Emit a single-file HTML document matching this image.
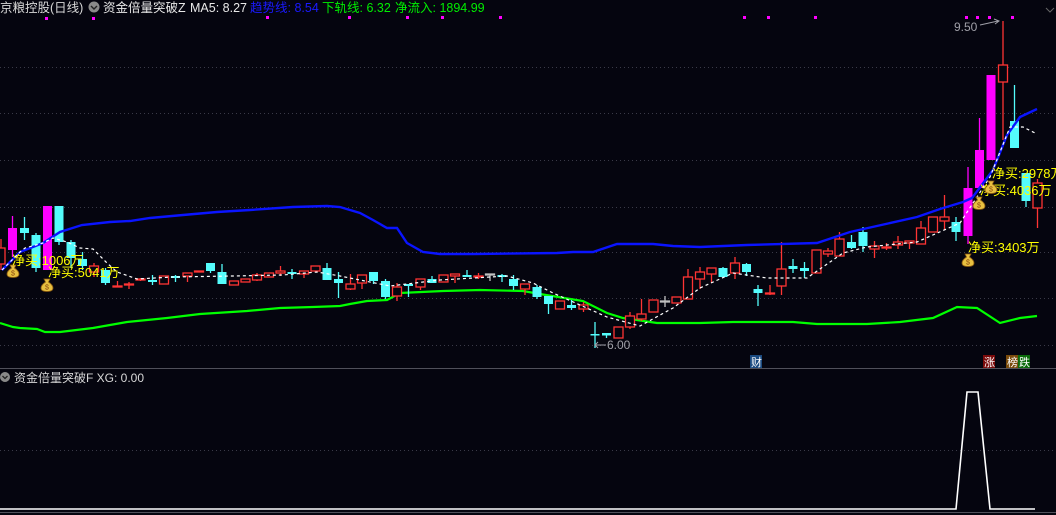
<!DOCTYPE html>
<html><head><meta charset="utf-8"><style>
html,body{margin:0;padding:0;background:#05050f;width:1056px;height:515px;overflow:hidden}
svg{position:absolute;left:0;top:0}
text{font-family:"Liberation Sans","Noto Sans CJK SC",sans-serif}
.r{fill:#05050f;stroke:#ff3434;stroke-width:1.3}
.rw{stroke:#ff3434;stroke-width:1.3}
.c{fill:#54fcfc}
.cw{stroke:#54fcfc;stroke-width:1.3}
.m{fill:#ff00ff}
.mw{stroke:#ff00ff;stroke-width:1.3}
.g{fill:#05050f;stroke:#c0c0c0;stroke-width:1.3}
.gw{stroke:#c0c0c0;stroke-width:1.3}
.grid{stroke:#3a3a48;stroke-width:1;stroke-dasharray:1 3}
</style></head><body>
<svg width="1056" height="515" viewBox="0 0 1056 515" xmlns="http://www.w3.org/2000/svg">
<g class="grid">
<line x1="0" y1="67.5" x2="1056" y2="67.5"/><line x1="0" y1="113.5" x2="1056" y2="113.5"/><line x1="0" y1="160.5" x2="1056" y2="160.5"/><line x1="0" y1="207.5" x2="1056" y2="207.5"/><line x1="0" y1="252.5" x2="1056" y2="252.5"/><line x1="0" y1="298.5" x2="1056" y2="298.5"/><line x1="0" y1="345.5" x2="1056" y2="345.5"/><line x1="0" y1="450.5" x2="1056" y2="450.5"/>
</g>
<line x1="0" y1="368.5" x2="1056" y2="368.5" stroke="#50505a"/>
<line x1="0" y1="512.5" x2="1056" y2="512.5" stroke="#50505a"/>
<!-- green lower band -->
<polyline fill="none" stroke="#00ff00" stroke-width="2.2" points="0,323 13,327 20,328 37,329 45,332 60,332 93,328 127,322 167,318 200,314 247,311 280,308 313,307 340,306 350,304 367,301 387,300 400,293 443,291 480,290 523,291 540,294 583,301 607,313 623,318 657,323 700,323 733,322 793,322 817,324 867,324 900,322 933,318 957,307 977,308 1000,323 1020,318 1037,316"/>
<!-- candles -->
<g>
<line class="rw" x1="1" y1="239" x2="1" y2="270"/><rect class="r" x="-4" y="248" width="9" height="16"/>
<line class="mw" x1="12.5" y1="216" x2="12.5" y2="257"/><rect class="m" x="8" y="228" width="9" height="22"/>
<line class="cw" x1="24.5" y1="217" x2="24.5" y2="240"/><rect class="c" x="20" y="228" width="9" height="5"/>
<line class="cw" x1="36" y1="233" x2="36" y2="272"/><rect class="c" x="31.5" y="235" width="9" height="33"/>
<rect class="m" x="43" y="206" width="9" height="64"/>
<line class="cw" x1="59" y1="206" x2="59" y2="245"/><rect class="c" x="54.5" y="206" width="9" height="36"/>
<line class="cw" x1="71" y1="240" x2="71" y2="268"/><rect class="c" x="66.5" y="242" width="9" height="16"/>
<line class="cw" x1="82.5" y1="252" x2="82.5" y2="270"/><rect class="c" x="78" y="259" width="9" height="7"/>
<line class="rw" x1="94" y1="263" x2="94" y2="277"/><rect class="r" x="89.5" y="266" width="9" height="6"/>
<line class="cw" x1="105.5" y1="268" x2="105.5" y2="285"/><rect class="c" x="101" y="270" width="9" height="13"/>
<line class="rw" x1="117.5" y1="281" x2="117.5" y2="287"/><rect class="r" x="113" y="286" width="9" height="1"/>
<line class="rw" x1="129" y1="282" x2="129" y2="289"/><rect class="r" x="124.5" y="284" width="9" height="1"/>
<line class="rw" x1="140.5" y1="278" x2="140.5" y2="281"/><rect class="r" x="136" y="279" width="9" height="1"/>
<line class="cw" x1="152.5" y1="275" x2="152.5" y2="285"/><rect class="c" x="148" y="280" width="9" height="2"/>
<rect class="r" x="159.5" y="276" width="9" height="8"/>
<line class="cw" x1="175.5" y1="275" x2="175.5" y2="282"/><rect class="c" x="171" y="276" width="9" height="2"/>
<line class="rw" x1="187.5" y1="273" x2="187.5" y2="282"/><rect class="r" x="183" y="273" width="9" height="3"/>
<rect class="r" x="194.5" y="271" width="9" height="1"/>
<line class="cw" x1="210.5" y1="263" x2="210.5" y2="273"/><rect class="c" x="206" y="263" width="9" height="8"/>
<line class="cw" x1="222" y1="264" x2="222" y2="284"/><rect class="c" x="217.5" y="272" width="9" height="12"/>
<rect class="r" x="229.5" y="281" width="9" height="4"/>
<rect class="r" x="241" y="279" width="9" height="3"/>
<line class="rw" x1="257" y1="273" x2="257" y2="281"/><rect class="r" x="252.5" y="275" width="9" height="5"/>
<rect class="r" x="264.5" y="273" width="9" height="4"/>
<line class="rw" x1="280.5" y1="266" x2="280.5" y2="276"/><rect class="r" x="276" y="271" width="9" height="2"/>
<line class="cw" x1="292" y1="269" x2="292" y2="279"/><rect class="c" x="287.5" y="272" width="9" height="2"/>
<line class="rw" x1="304" y1="271" x2="304" y2="278"/><rect class="r" x="299.5" y="271" width="9" height="3"/>
<rect class="r" x="311" y="266" width="9" height="5"/>
<line class="cw" x1="327" y1="263" x2="327" y2="280"/><rect class="c" x="322.5" y="268" width="9" height="12"/>
<line class="cw" x1="338.5" y1="272" x2="338.5" y2="298"/><rect class="c" x="334" y="279" width="9" height="4"/>
<line class="rw" x1="350.5" y1="274" x2="350.5" y2="290"/><rect class="r" x="346" y="284" width="9" height="5"/>
<line class="rw" x1="362" y1="275" x2="362" y2="289"/><rect class="r" x="357.5" y="275" width="9" height="8"/>
<line class="cw" x1="373.5" y1="272" x2="373.5" y2="284"/><rect class="c" x="369" y="272" width="9" height="9"/>
<line class="cw" x1="385.5" y1="279" x2="385.5" y2="299"/><rect class="c" x="381" y="281" width="9" height="16"/>
<line class="rw" x1="397" y1="283" x2="397" y2="301"/><rect class="r" x="392.5" y="287" width="9" height="9"/>
<line class="cw" x1="408.5" y1="284" x2="408.5" y2="297"/><rect class="c" x="404" y="284" width="9" height="2"/>
<line class="rw" x1="420.5" y1="279" x2="420.5" y2="290"/><rect class="r" x="416" y="279" width="9" height="8"/>
<line class="cw" x1="432" y1="276" x2="432" y2="283"/><rect class="c" x="427.5" y="279" width="9" height="4"/>
<rect class="r" x="439" y="275" width="9" height="7"/>
<line class="rw" x1="455" y1="274" x2="455" y2="283"/><rect class="r" x="450.5" y="274" width="9" height="2"/>
<line class="cw" x1="467" y1="270" x2="467" y2="277"/><rect class="c" x="462.5" y="275" width="9" height="2"/>
<line class="rw" x1="478.5" y1="273" x2="478.5" y2="279"/><rect class="r" x="474" y="276" width="9" height="1"/>
<line class="gw" x1="490" y1="274" x2="490" y2="281"/><rect class="g" x="485.5" y="274" width="9" height="1"/>
<line class="cw" x1="502" y1="274" x2="502" y2="282"/><rect class="c" x="497.5" y="275" width="9" height="2"/>
<line class="cw" x1="513.5" y1="275" x2="513.5" y2="290"/><rect class="c" x="509" y="279" width="9" height="7"/>
<line class="rw" x1="525" y1="284" x2="525" y2="295"/><rect class="r" x="520.5" y="284" width="9" height="5"/>
<line class="cw" x1="537" y1="285" x2="537" y2="299"/><rect class="c" x="532.5" y="287" width="9" height="10"/>
<line class="cw" x1="548.5" y1="296" x2="548.5" y2="314"/><rect class="c" x="544" y="296" width="9" height="8"/>
<rect class="r" x="555.5" y="301" width="9" height="8"/>
<line class="cw" x1="571.5" y1="300" x2="571.5" y2="310"/><rect class="c" x="567" y="305" width="9" height="3"/>
<line class="rw" x1="583.5" y1="302" x2="583.5" y2="312"/><rect class="r" x="579" y="305" width="9" height="4"/>
<line class="cw" x1="595" y1="322" x2="595" y2="348"/><rect class="c" x="590.5" y="334" width="9" height="1.5"/>
<line class="cw" x1="606.5" y1="333" x2="606.5" y2="338"/><rect class="c" x="602" y="333" width="9" height="2.5"/>
<rect class="r" x="614" y="327" width="9" height="11"/>
<line class="rw" x1="630" y1="312" x2="630" y2="329"/><rect class="r" x="625.5" y="316" width="9" height="11"/>
<line class="rw" x1="641.5" y1="299" x2="641.5" y2="321"/><rect class="r" x="637" y="314" width="9" height="5"/>
<rect class="r" x="649" y="300" width="9" height="12"/>
<line class="gw" x1="665" y1="296" x2="665" y2="307"/><rect class="g" x="660.5" y="301" width="9" height="1"/>
<rect class="r" x="672" y="297" width="9" height="6"/>
<line class="rw" x1="688" y1="269" x2="688" y2="299"/><rect class="r" x="683.5" y="277" width="9" height="22"/>
<line class="rw" x1="700" y1="267" x2="700" y2="289"/><rect class="r" x="695.5" y="272" width="9" height="7"/>
<line class="rw" x1="711.5" y1="268" x2="711.5" y2="283"/><rect class="r" x="707" y="268" width="9" height="6"/>
<line class="cw" x1="723" y1="267" x2="723" y2="278"/><rect class="c" x="718.5" y="268" width="9" height="9"/>
<line class="rw" x1="735" y1="257" x2="735" y2="279"/><rect class="r" x="730.5" y="263" width="9" height="10"/>
<line class="cw" x1="746.5" y1="263" x2="746.5" y2="276"/><rect class="c" x="742" y="264" width="9" height="8"/>
<line class="cw" x1="758" y1="285" x2="758" y2="306"/><rect class="c" x="753.5" y="289" width="9" height="4"/>
<line class="rw" x1="770" y1="285" x2="770" y2="295"/><rect class="r" x="765.5" y="293" width="9" height="1"/>
<line class="rw" x1="781.5" y1="242" x2="781.5" y2="295"/><rect class="r" x="777" y="269" width="9" height="17"/>
<line class="cw" x1="793" y1="259" x2="793" y2="273"/><rect class="c" x="788.5" y="266" width="9" height="3"/>
<line class="cw" x1="804.5" y1="262" x2="804.5" y2="278"/><rect class="c" x="800" y="268" width="9" height="3"/>
<rect class="r" x="812" y="250" width="9" height="23"/>
<line class="rw" x1="828" y1="248" x2="828" y2="257"/><rect class="r" x="823.5" y="251" width="9" height="3"/>
<line class="rw" x1="839.5" y1="232" x2="839.5" y2="256"/><rect class="r" x="835" y="239" width="9" height="17"/>
<line class="cw" x1="851.5" y1="235" x2="851.5" y2="249"/><rect class="c" x="847" y="242" width="9" height="6"/>
<line class="cw" x1="863" y1="227" x2="863" y2="252"/><rect class="c" x="858.5" y="232" width="9" height="14"/>
<line class="rw" x1="874.5" y1="241" x2="874.5" y2="258"/><rect class="r" x="870" y="246" width="9" height="3"/>
<line class="rw" x1="886.5" y1="243" x2="886.5" y2="250"/><rect class="r" x="882" y="247" width="9" height="1"/>
<line class="rw" x1="898" y1="236" x2="898" y2="249"/><rect class="r" x="893.5" y="242" width="9" height="3"/>
<line class="rw" x1="909.5" y1="241" x2="909.5" y2="249"/><rect class="r" x="905" y="241" width="9" height="2"/>
<line class="rw" x1="921" y1="221" x2="921" y2="244"/><rect class="r" x="916.5" y="228" width="9" height="16"/>
<rect class="r" x="928.5" y="217" width="9" height="15"/>
<line class="rw" x1="944.5" y1="195" x2="944.5" y2="230"/><rect class="r" x="940" y="217" width="9" height="4"/>
<line class="cw" x1="956" y1="217" x2="956" y2="241"/><rect class="c" x="951.5" y="222" width="9" height="10"/>
<line class="mw" x1="968" y1="167" x2="968" y2="244"/><rect class="m" x="963.5" y="188" width="9" height="48"/>
<line class="mw" x1="979.5" y1="118" x2="979.5" y2="188"/><rect class="m" x="975" y="150" width="9" height="38"/>
<rect class="m" x="986.5" y="75" width="9" height="85"/>
<line class="rw" x1="1003" y1="21" x2="1003" y2="140"/><rect class="r" x="998.5" y="65" width="9" height="17"/>
<line class="cw" x1="1014.5" y1="85" x2="1014.5" y2="148"/><rect class="c" x="1010" y="121" width="9" height="27"/>
<line class="cw" x1="1026" y1="173" x2="1026" y2="207"/><rect class="c" x="1021.5" y="173" width="9" height="28"/>
<line class="rw" x1="1037.5" y1="179" x2="1037.5" y2="228"/><rect class="r" x="1033" y="183" width="9" height="25"/>
</g>
<!-- blue trend -->
<polyline fill="none" stroke="#0a14ff" stroke-width="2.4" points="2,270 20,252 43,243 60,232 82,225 110,222 130,221 150,218 183,215 217,212 250,210 293,207 327,206 340,207 360,213 373,220 387,228 397,228 407,243 423,252 440,254 473,254 557,253 573,252 593,252 617,244 653,244 673,246 700,247 747,245 817,243 850,232 917,217 940,209 963,202 972,198 993,170 1007,135 1020,117 1037,109"/>
<!-- white dashed MA -->
<polyline fill="none" stroke="#ffffff" stroke-width="1.2" stroke-dasharray="3 3" points="2,270 20,252 25,248 43,243 53,238 67,242 80,248 93,249 107,263 117,272 137,279 173,277 233,276 283,275 317,272 340,276 390,286 440,280 507,276 533,283 553,293 607,317 640,326 673,308 700,288 733,273 767,278 807,278 843,253 867,247 917,242 960,223 990,177 1010,127 1023,127 1035,133"/>
<!-- money bags -->
<g>
<g transform="translate(13,271)"><path d="M-3,-6 L3,-6 L1.5,-3 Q6,0 6,3 Q6,6.5 0,6.5 Q-6,6.5 -6,3 Q-6,0 -1.5,-3 Z" fill="#e8c040" stroke="#8a5a10" stroke-width="0.8"/><text x="0" y="4.5" font-size="7" text-anchor="middle" fill="#8a4a10">$</text></g>
<g transform="translate(47,285)"><path d="M-3,-6 L3,-6 L1.5,-3 Q6,0 6,3 Q6,6.5 0,6.5 Q-6,6.5 -6,3 Q-6,0 -1.5,-3 Z" fill="#e8c040" stroke="#8a5a10" stroke-width="0.8"/><text x="0" y="4.5" font-size="7" text-anchor="middle" fill="#8a4a10">$</text></g>
</g>
<g fill="#ffff00" font-size="13">
<text x="12" y="265">净买:1006万</text>
<text x="48" y="277">净买:5041万</text>
<text x="992" y="178">净买:2978万</text>
<text x="980" y="195">净买:4036万</text>
<text x="968" y="252">净买:3403万</text>
</g>
<g>
<g transform="translate(991,187)"><path d="M-3,-6 L3,-6 L1.5,-3 Q6,0 6,3 Q6,6.5 0,6.5 Q-6,6.5 -6,3 Q-6,0 -1.5,-3 Z" fill="#e8c040" stroke="#8a5a10" stroke-width="0.8"/><text x="0" y="4.5" font-size="7" text-anchor="middle" fill="#8a4a10">$</text></g>
<g transform="translate(979,203)"><path d="M-3,-6 L3,-6 L1.5,-3 Q6,0 6,3 Q6,6.5 0,6.5 Q-6,6.5 -6,3 Q-6,0 -1.5,-3 Z" fill="#e8c040" stroke="#8a5a10" stroke-width="0.8"/><text x="0" y="4.5" font-size="7" text-anchor="middle" fill="#8a4a10">$</text></g>
<g transform="translate(968,260)"><path d="M-3,-6 L3,-6 L1.5,-3 Q6,0 6,3 Q6,6.5 0,6.5 Q-6,6.5 -6,3 Q-6,0 -1.5,-3 Z" fill="#e8c040" stroke="#8a5a10" stroke-width="0.8"/><text x="0" y="4.5" font-size="7" text-anchor="middle" fill="#8a4a10">$</text></g>
</g>
<!-- price markers -->
<text x="954" y="31" font-size="12" fill="#a0a0a8">9.50</text>
<path d="M980,25 L998,21 M994,19 L999,21 L995,24" stroke="#a0a0a8" fill="none"/>
<text x="607" y="349" font-size="12" fill="#a0a0a8">6.00</text>
<path d="M595,345 L606,345 M598,342 L595,345 L598,348" stroke="#a0a0a8" fill="none"/>
<path d="M1046,8 L1050,12 L1054,8" stroke="#666" fill="none"/>
<!-- badges -->
<rect x="750" y="355" width="12" height="13" fill="#1a4a80"/><text x="751" y="366" font-size="11" fill="#fff">财</text>
<rect x="983" y="355" width="12" height="13" fill="#7a0a0a"/><text x="984" y="366" font-size="11" fill="#fff">涨</text>
<rect x="1006" y="355" width="12" height="13" fill="#7a4a0a"/><text x="1007" y="366" font-size="11" fill="#fff">榜</text>
<rect x="1018" y="355" width="12" height="13" fill="#0a6a0a"/><text x="1019" y="366" font-size="11" fill="#fff">跌</text>
<!-- header -->
<g font-size="12.5">
<text x="0" y="12" fill="#d8d8d8">京粮控股(日线)</text>
<circle cx="94" cy="7" r="5.5" fill="#8a8a8a"/><path d="M91,6 L94,9 L97,6" stroke="#222" stroke-width="1.4" fill="none"/>
<text x="103" y="12" fill="#e8e8e8">资金倍量突破Z</text>
<text x="190" y="12" fill="#e8e8e8">MA5: 8.27</text>
<text x="250" y="12" fill="#1a1aff">趋势线: 8.54</text>
<text x="322" y="12" fill="#00ee00">下轨线: 6.32</text>
<text x="395" y="12" fill="#00ee00">净流入: 1894.99</text>
</g>
<!-- magenta dots -->
<g fill="#ff00ff"><rect x="45" y="17" width="3" height="3"/><rect x="92" y="17" width="3" height="3"/><rect x="266" y="16" width="3" height="3"/><rect x="348" y="16" width="3" height="3"/><rect x="406" y="16" width="3" height="3"/><rect x="441" y="16" width="3" height="3"/><rect x="499" y="16" width="3" height="3"/><rect x="743" y="16" width="3" height="3"/><rect x="767" y="16" width="3" height="3"/><rect x="814" y="16" width="3" height="3"/><rect x="965" y="16" width="3" height="3"/><rect x="976" y="16" width="3" height="3"/><rect x="988" y="16" width="3" height="3"/><rect x="1011" y="16" width="3" height="3"/></g>
<circle cx="5" cy="377" r="5" fill="#8a8a8a"/><path d="M2.5,376 L5,378.5 L7.5,376" stroke="#222" stroke-width="1.3" fill="none"/>
<text x="14" y="382" font-size="12" fill="#d8d8d8">资金倍量突破F XG: 0.00</text>
<!-- XG line -->
<polyline fill="none" stroke="#ffffff" stroke-width="1.6" points="0,509 956,509 967,392 978,392 990,509 1035,509"/>
</svg>
</body></html>
